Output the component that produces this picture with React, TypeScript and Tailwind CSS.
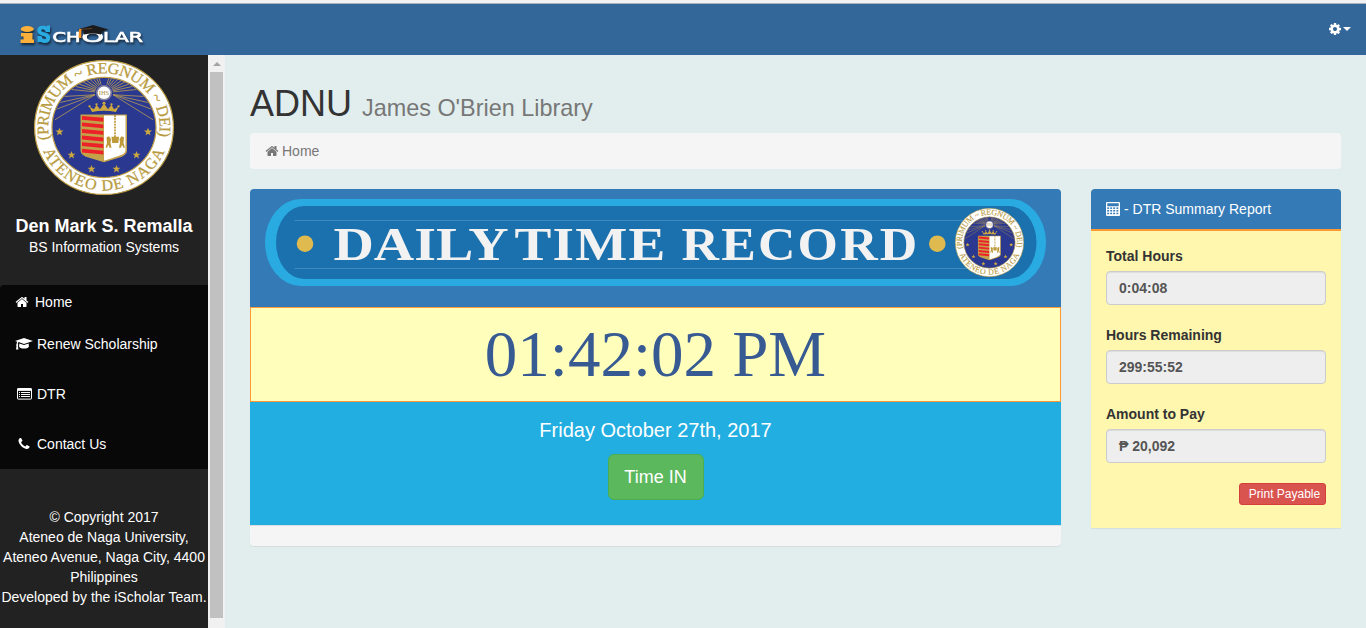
import React from "react";

const HOME =
  "M1472 992v480q0 26-19 45t-45 19h-384v-384h-256v384h-384q-26 0-45-19t-19-45v-480q0-1 .5-3t.5-3l575-474 575 474q1 2 1 6zm223-69l-62 74q-8 9-21 11h-3q-13 0-21-7l-692-577-692 577q-12 8-24 7-13-2-21-11l-62-74q-8-10-7-23.5t11-21.5l719-599q32-26 76-26t76 26l244 204v-195q0-14 9-23t23-9h192q14 0 23 9t9 23v408l219 182q10 8 11 21.5t-7 23.5z";
const PHONE =
  "M1600 1240q0 27-10 70.5t-21 68.5q-21 50-122 106-94 51-186 51-27 0-53-3.5t-57.5-12.5-47-14.5-55.5-20.5-49-18q-98-35-175-83-127-79-264-216t-216-264q-48-77-83-175-3-9-18-49t-20.5-55.5-14.5-47-12.5-57.5-3.5-53q0-92 51-186 56-101 106-122 25-11 68.5-21t70.5-10q14 0 21 3 18 6 53 76 11 19 30 54t35 63.5 31 53.5q3 4 17.5 25t21.5 35.5 7 28.5q0 20-28.5 50t-62 55-62 53-28.5 46q0 9 5 22.5t8.5 20.5 14 24 11.5 19q76 137 174 235t235 174q2 1 19 11.5t24 14 20.5 8.5 22.5 5q18 0 46-28.5t53-62 55-62 50-28.5q14 0 28.5 7t35.5 21.5 25 17.5q25 15 53.5 31t63.5 35 54 30q70 35 76 53 3 7 3 21z";
const COG =
  "M1152 896q0-106-75-181t-181-75-181 75-75 181 75 181 181 75 181-75 75-181zm512-109v222q0 12-8 23t-20 13l-185 28q-19 54-39 91 35 50 107 138 10 12 10 25t-9 23q-27 37-99 108t-94 71q-12 0-26-9l-138-108q-44 23-91 38-16 136-29 186-7 28-36 28h-222q-14 0-24.5-8.5t-11.5-21.5l-28-184q-49-16-90-37l-141 107q-10 9-25 9-14 0-25-11-126-114-165-168-7-10-7-23 0-12 8-23 15-21 51-66.5t54-70.5q-27-50-41-99l-183-27q-13-2-21-12.5t-8-23.5v-222q0-12 8-23t19-13l186-28q14-46 39-92-40-57-107-138-10-12-10-24 0-10 9-23 26-36 98.5-107.5t94.5-71.5q13 0 26 10l138 107q44-23 91-38 16-136 29-186 7-28 36-28h222q14 0 24.5 8.5t11.5 21.5l28 184q49 16 90 37l142-107q9-9 24-9 13 0 25 10 129 119 165 170 7 8 7 22 0 12-8 23-15 21-51 66.5t-54 70.5q26 50 41 98l183 28q13 2 21 12.5t8 23.5z";

function Glyph({ d, className }: { d: string; className: string }) {
  return (
    <svg viewBox="0 0 1792 1792" fill="currentColor" className={className}>
      <path d={d} />
    </svg>
  );
}

function CapIcon() {
  return (
    <svg width="18" height="14" viewBox="0 0 18 14" fill="currentColor">
      <path d="M9 0.9 18 3.9 9 6.9 3.6 5.1C3 5.6 2.8 6.3 2.8 7.2c.6.4.6 1.2.1 1.6L3.4 12.6H1L1.5 8.8c-.5-.4-.5-1.2.1-1.6 0-1 .2-1.9.7-2.5L0 3.9Z" />
      <path d="M4.3 6.5 9 8.1l4.7-1.6.2 3c0 1.2-2.2 2.1-4.9 2.1s-4.9-.9-4.9-2.1Z" />
    </svg>
  );
}

function ListIcon() {
  return (
    <svg width="15" height="12" viewBox="0 0 15 12" fill="none">
      <rect x="0.5" y="0.5" width="14" height="10.6" rx="0.6" stroke="#fff" />
      <path d="M0.5 0.5h14v2.4H0.5z" fill="#fff" />
      <path d="M2 4.5h1M2 6.5h1M2 8.5h1M4 4.5h9M4 6.5h9M4 8.5h9" stroke="#fff" />
    </svg>
  );
}

function CalculatorIcon() {
  return (
    <svg width="14" height="14" viewBox="0 0 14 14">
      <rect width="14" height="14" rx="1" fill="#fff" />
      <path d="M1.3 1.3h11.4v3H1.3z" fill="#337ab7" />
      {[5.4, 8, 10.7].map((y) =>
        [1.2, 4.2, 7.2, 10.4].map((x) => (
          <rect key={`${x}-${y}`} x={x} y={y} width="1.9" height="1.5" fill="#337ab7" />
        ))
      )}
    </svg>
  );
}

const RAYS = [-84, -77, -70, -62, -54, -45, -36, -27, -18, 18, 27, 36, 45, 54, 62, 70, 77, 84];
const LOW_RAYS = [
  [20, 52], [22, 45], [27, 38], [120, 52], [118, 45], [113, 38], [21, 62], [119, 62],
];
const STARS = [
  [25.5, 74.5], [37.5, 98.5], [57.5, 113], [82.5, 113], [102.5, 98.5], [114, 74.5],
];

function Seal({ id, className }: { id: string; className: string }) {
  return (
    <svg viewBox="0 0 140 140" preserveAspectRatio="none" className={className}>
      <defs>
        <path id={`${id}-top`} d="M15.6 82 A55.8 55.8 0 1 1 124.4 82" />
        <path id={`${id}-bottom`} d="M4.7 76 A65.6 65.6 0 0 0 135.3 76" />
        <clipPath id={`${id}-disc`}>
          <circle cx="70" cy="70" r="51" />
        </clipPath>
      </defs>
      <circle cx="70" cy="70" r="69.4" fill="#fff" stroke="#bfa046" strokeWidth="1.2" />
      <circle cx="70" cy="70" r="52" fill="#2a388f" stroke="#bfa046" strokeWidth="1.2" />
      <g clipPath={`url(#${id}-disc)`} stroke="#b79c55" strokeWidth="0.8">
        {RAYS.map((a) => (
          <path key={a} d="M70 25 V-12" transform={`rotate(${a} 70 34)`} />
        ))}
        {LOW_RAYS.map(([x, y]) => (
          <path key={`${x}-${y}`} d={`M${x > 70 ? 79 : 61} 36 L${x} ${y}`} />
        ))}
      </g>
      <circle cx="70" cy="34" r="8" fill="#8380a0" />
      <circle cx="70" cy="34" r="6.4" fill="#fff" />
      <text x="70" y="36.3" textAnchor="middle" fontSize="6.5" fontFamily="Liberation Serif, serif" fill="#a99344">
        IHS
      </text>
      <g fill="#cda83f">
        <path d="M58 54 55.5 48.5 60 51 62.5 46.5 66 51 70 45 74 51 77.5 46.5 80 51 84.5 48.5 82 54Q70 51.5 58 54Z" />
        <circle cx="55.5" cy="48" r="1.2" />
        <circle cx="62.5" cy="46" r="1.2" />
        <circle cx="70" cy="44.8" r="1.5" />
        <circle cx="77.5" cy="46" r="1.2" />
        <circle cx="84.5" cy="48" r="1.2" />
        {STARS.map(([x, y]) => (
          <path
            key={x}
            transform={`translate(${x} ${y})`}
            d="M0-4.2 1.1-1.3 4-1.3 1.7.6 2.5 3.6 0 1.9-2.5 3.6-1.7.6-4-1.3-1.1-1.3Z"
          />
        ))}
      </g>
      <path d="M46.5 56.5H93V94Q93 99 84 101.5L70 106 56 101.500Q46.500 99 46.500 94Z" fill="#c3a24a" />
      <path d="M70 57.500H91.500V94Q91 97.500 83 100L70 104.500Z" fill="#fff" />
      <g fill="#ed2228">
        {[58, 64.8, 71.6, 78.4, 85.2, 92].map((y) => (
          <path key={y} d={`M48 ${y}L69.3 ${y + 2}V${y + 6}L48 ${y + 4}Z`} />
        ))}
      </g>
      <g fill="#bd9a3a">
        <path d="M81 57V80" stroke="#bd9a3a" strokeWidth="1.8" strokeDasharray="2 1" />
        <path d="M77.5 79.500H85L84.300 86H78.200Z" />
        <path d="M72.500 80 75 79 77 82 76.500 86 77.500 91H75.500L74.500 88 73 91H71.500L73 86Z" />
        <path d="M90 80 87.500 79 85.500 82 86 86 85 91H87L88 88 89.500 91H91L89.500 86Z" />
      </g>
      <g fill="#b99b3f" stroke="#b99b3f" strokeWidth="0.25" fontFamily="Liberation Serif, serif" fontSize="16.2">
        <text>
          <textPath href={`#${id}-top`} startOffset="0" textLength="197" lengthAdjust="spacing">
            (PRIMUM ~ REGNUM ~ DEI)
          </textPath>
        </text>
        <text>
          <textPath href={`#${id}-bottom`} startOffset="19" textLength="155" lengthAdjust="spacing">
            ATENEO DE NAGA
          </textPath>
        </text>
      </g>
    </svg>
  );
}

function Logo() {
  return (
    <svg width="136" height="30" viewBox="14 20 136 30" className="drop-shadow-[1px_2px_1px_rgba(0,0,0,0.6)]">
      <ellipse cx="27.3" cy="29" rx="6.6" ry="3" fill="#fbb03b" />
      <path d="M21 33H32.500V39.500H34V43H20.500V39.500H23.500V36.500H21Z" fill="#fbb03b" />
      <path
        d="M47.500 25.500H50V32H46Q45 29.300 42.800 29.300 41.300 29.300 41.300 30.500 41.300 31.800 45.500 32.800 50.300 34 50.300 38 50.300 43 44.500 43 42.600 43 41 42H37.500V36H41.500Q42.300 39.300 44.500 39.300 46.200 39.300 46.200 38 46.200 36.800 42.300 35.700 37.300 34.300 37.300 30.500 37.300 25.800 43 25.800 45.500 25.800 46.500 26.500Z"
        fill="#29abe2"
      />
      <g fill="#fff" stroke="#fff" strokeWidth="0.7" fontFamily="DejaVu Sans, sans-serif" fontSize="14.5">
        <text x="52.5" y="42.2" textLength="28" lengthAdjust="spacingAndGlyphs">CH</text>
        <text x="81.5" y="42.2" textLength="22.500" lengthAdjust="spacingAndGlyphs">O</text>
        <text x="103" y="42.2" textLength="40" lengthAdjust="spacingAndGlyphs">LAR</text>
      </g>
      <path d="M77.500 29.500 93 25 108.500 29.500 101.500 31.500 101 34.500Q93 32.500 84 34.500V31.300Z" fill="#1b1b1b" />
      <path d="M92 28.500 80 29.500V33" stroke="#a8652a" strokeWidth="0.5" fill="none" />
      <path d="M79 29H81.300V38H78.700Z" fill="#f7931e" />
    </svg>
  );
}

function Banner() {
  return (
    <svg width="781" height="87" viewBox="265 199 781 87" className="block">
      <rect x="265" y="199" width="781" height="87" rx="36" ry="43.5" fill="#29abe2" />
      <rect x="276" y="206" width="760.5" height="73" rx="28" ry="36.5" fill="#1b70ae" />
      <path d="M294.500 220.500H985M294.500 268.500H985" stroke="#4489bc" />
      <circle cx="305" cy="243.7" r="8.3" fill="#dfba4e" />
      <circle cx="937.3" cy="243.7" r="8.3" fill="#dfba4e" />
      <g fill="#f2f2f2" fontFamily="Liberation Serif, serif" fontWeight="bold" fontSize="47">
        <text x="333.5" y="260" textLength="175" lengthAdjust="spacingAndGlyphs">DAILY</text>
        <text x="514.5" y="260" textLength="152" lengthAdjust="spacingAndGlyphs" letterSpacing="1">TIME</text>
        <text x="681.5" y="260" textLength="238" lengthAdjust="spacingAndGlyphs" letterSpacing="2">RECORD</text>
      </g>
      <svg x="955" y="208" width="69" height="69">
        <Seal id="small" className="h-full w-full" />
      </svg>
    </svg>
  );
}

function Field({ label, value }: { label: string; value: string }) {
  return (
    <div className="mb-5">
      <div className="mb-[5px] text-[#333]">{label}</div>
      <div className="flex h-[34px] items-center rounded border border-[#ccc] bg-[#eee] px-3 text-[#555] shadow-[inset_0_1px_1px_rgba(0,0,0,0.075)]">
        {value}
      </div>
    </div>
  );
}

export default function App() {
  return (
    <div className="flex h-[628px] w-[1366px] flex-col overflow-hidden bg-[#e2eeee] font-['Liberation_Sans',Arial,sans-serif] text-[14px] leading-5">
      <div className="h-1 shrink-0 border-b border-[#a9b3bf] bg-[#f1f1f1]" />
      <header className="flex h-[51px] shrink-0 items-start justify-between bg-[#336699] pr-[15px] pl-[14px]">
        <div className="pt-4">
          <Logo />
        </div>
        <div className="flex items-center pt-[18px] text-white">
          <Glyph d={COG} className="h-[14px] w-[14px]" />
          <span className="ml-px border-x-4 border-t-4 border-x-transparent border-t-white" />
        </div>
      </header>

      <div className="flex min-h-0 flex-1">
        <aside className="flex w-[208px] shrink-0 flex-col bg-[#222] text-white">
          <div className="flex h-[230px] flex-col items-center pt-[5px]">
            <Seal id="large" className="h-[135px] w-[140px]" />
            <div className="mt-[21px] text-[18px] font-bold whitespace-nowrap">Den Mark S. Remalla</div>
            <div className="mt-px">BS Information Systems</div>
          </div>
          <nav className="rounded-tl bg-[#080808]">
            <a className="flex h-[34px] items-center pl-[15px]">
              <Glyph d={HOME} className="mr-1.5 h-[14px] w-[14px]" />
              Home
            </a>
            <a className="flex h-[50px] items-center pl-[15px]">
              <span className="w-[22px]"><CapIcon /></span>Renew Scholarship
            </a>
            <a className="flex h-[50px] items-center pl-[17px]">
              <span className="w-5"><ListIcon /></span>DTR
            </a>
            <a className="flex h-[50px] items-center pl-[17px]">
              <span className="w-5"><Glyph d={PHONE} className="h-[14px] w-[14px]" /></span>Contact Us
            </a>
          </nav>
          <div className="pt-[38px] text-center whitespace-nowrap">
            <div>© Copyright 2017</div>
            <div>Ateneo de Naga University,</div>
            <div>Ateneo Avenue, Naga City, 4400</div>
            <div>Philippines</div>
            <div>Developed by the iScholar Team.</div>
          </div>
        </aside>

        <div className="flex w-[17px] shrink-0 flex-col items-center bg-[#f1f1f1]">
          <div className="flex h-[17px] items-center">
            <span className="border-x-4 border-b-4 border-x-transparent border-b-[#a3a3a3]" />
          </div>
          <div className="h-[546px] w-[13px] bg-[#c1c1c1]" />
        </div>

        <main className="flex-1 pr-[25px] pl-[25px]">
          <h1 className="mt-[29px] text-[36px] leading-10 text-[#333]">
            ADNU <small className="text-[23.4px] text-[#777]">James O'Brien Library</small>
          </h1>
          <div className="mt-[5px] flex h-9 items-center rounded bg-[#f5f5f5] px-[15px] text-[#777]">
            <Glyph d={HOME} className="mr-[3px] h-[14px] w-[14px]" />
            Home
          </div>

          <div className="mt-5 flex items-start gap-[30px]">
            <section className="w-[811px] overflow-hidden rounded bg-[#f5f5f5] shadow-[0_1px_1px_rgba(0,0,0,0.07)]">
              <div className="h-[118px] bg-[#337ab7] px-[15px] pt-[10px]">
                <Banner />
              </div>
              <div className="h-[95px] border border-[#ff9933] bg-[#ffffbb] text-center font-['Liberation_Serif','Times_New_Roman',serif] text-[65px] leading-[93px] text-[#375a93]">
                01:42:02 PM
              </div>
              <div className="flex h-[123px] flex-col items-center bg-[#22aee0] pt-[18px] text-white">
                <div className="text-[20px]">Friday October 27th, 2017</div>
                <button className="mt-[14px] h-[46px] w-24 rounded-md border border-[#4cae4c] bg-[#5cb85c] text-[18px]">
                  Time IN
                </button>
              </div>
              <div className="h-[21px] border-t border-[#ddd]" />
            </section>

            <section className="w-[250px] overflow-hidden rounded-t bg-[#fff7ae] shadow-[0_1px_1px_rgba(0,0,0,0.07)]">
              <div className="flex h-[42px] items-center gap-1 border-b-2 border-[#ff9933] bg-[#337ab7] px-[15px] text-white">
                <CalculatorIcon />
                <span>- DTR Summary Report</span>
              </div>
              <div className="h-[297px] px-[15px] pt-[15px] font-bold">
                <Field label="Total Hours" value="0:04:08" />
                <Field label="Hours Remaining" value="299:55:52" />
                <Field label="Amount to Pay" value="₱ 20,092" />
                <div className="flex justify-end">
                  <button className="h-[22px] w-[87px] rounded-[3px] border border-[#d43f3a] bg-[#d9534f] pl-1 text-[12px] leading-[18px] font-normal whitespace-nowrap text-white">
                    Print Payable
                  </button>
                </div>
              </div>
            </section>
          </div>
        </main>
      </div>
    </div>
  );
}
